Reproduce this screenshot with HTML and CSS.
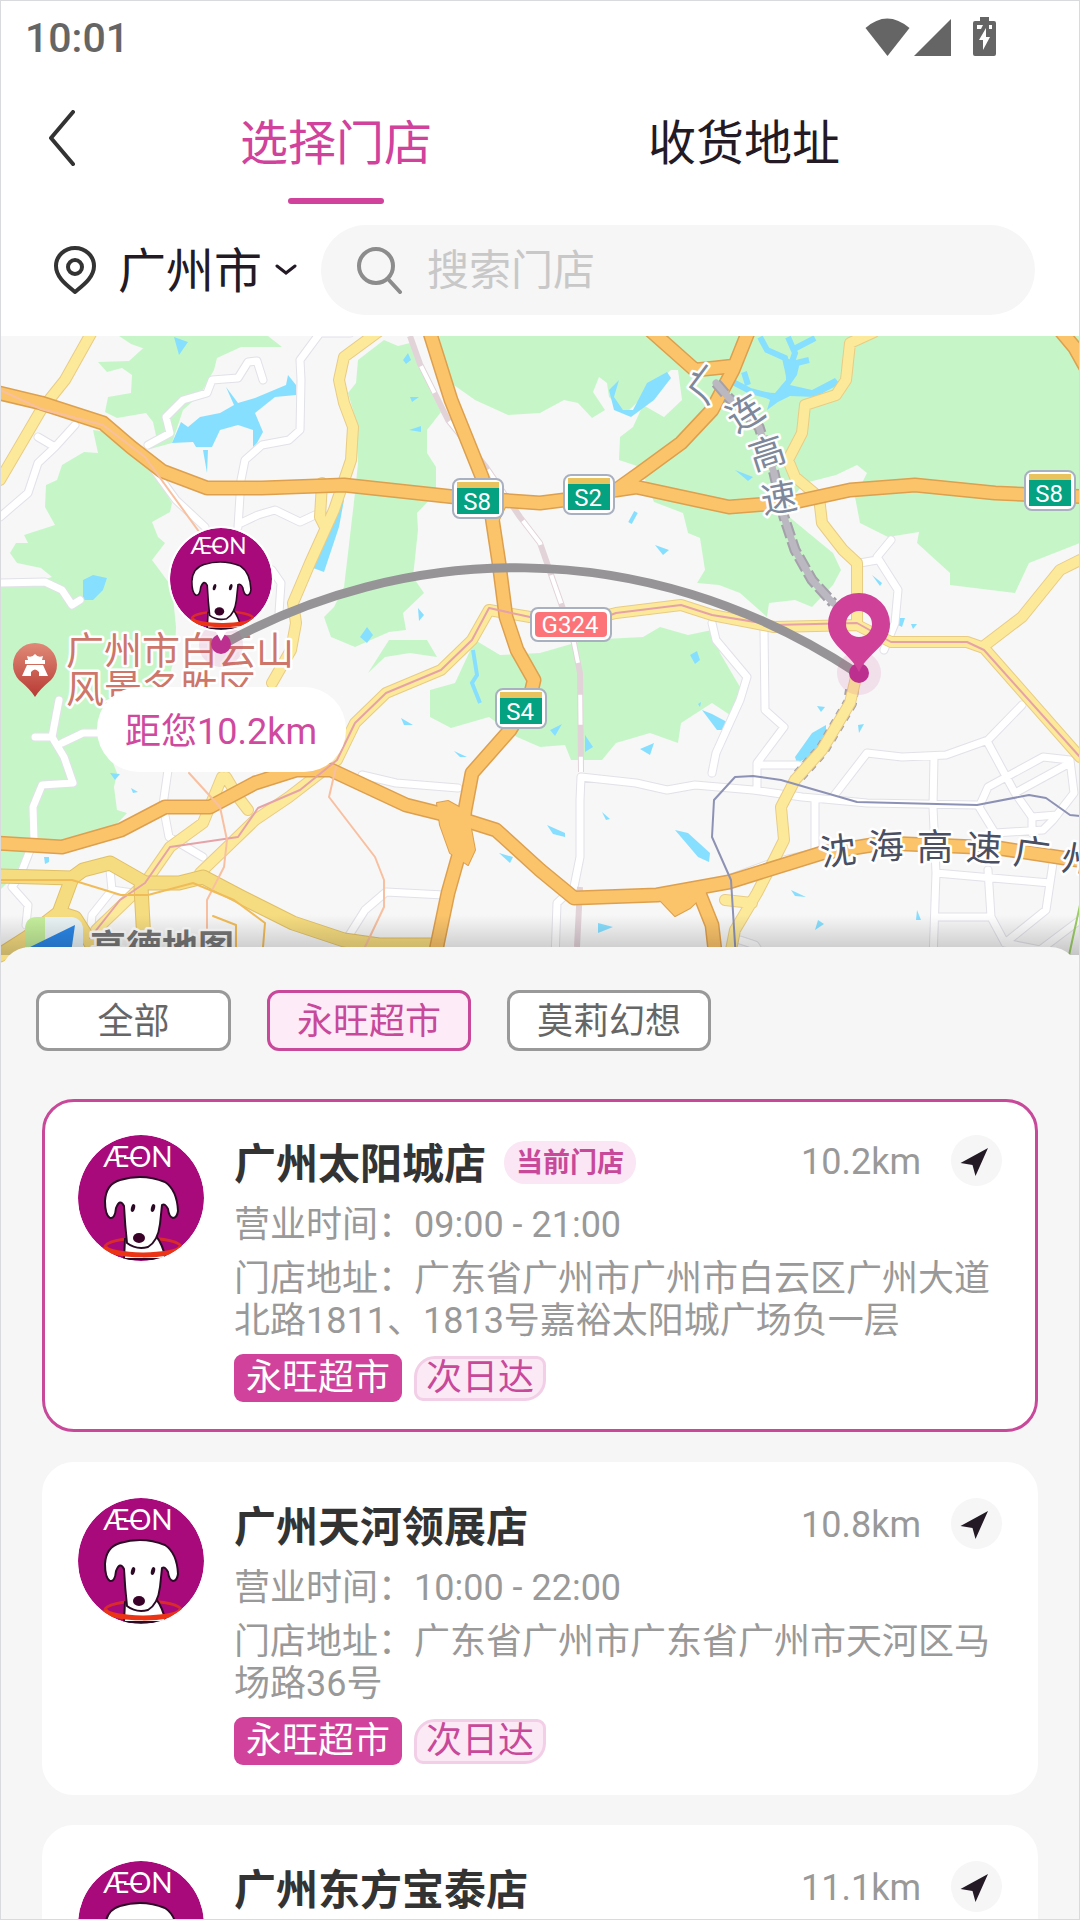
FILE: index.html
```html
<!DOCTYPE html>
<html lang="zh-CN">
<head>
  <meta charset="UTF-8" />
  <meta name="viewport" content="width=device-width, initial-scale=1.0"/>
  <title>选择门店</title>
  <link rel="stylesheet" href="styles.css">
</head>
<body>
  <!-- Símbolos compartidos -->
  <svg class="symbols" aria-hidden="true">
    <symbol id="logo" viewBox="0 0 126 126">
      <clipPath id="logo-clip"><circle cx="63" cy="63" r="63" /></clipPath>
      <g clip-path="url(#logo-clip)">
        <circle cx="63" cy="63" r="63" fill="#a80a7b" />
        <text class="logo-text" x="60" y="32" text-anchor="middle">ÆON</text>
        <path d="M46 23 H64" stroke="#fff" stroke-width="2" />
        <path d="M27 112 A38 9 0 0 1 103 112" fill="none" stroke="#d92b2b" stroke-width="3" />
        <path d="M47 104 L46 124 H88 Q84 108 78 101 Z" fill="#fff" stroke="#2c0a26" stroke-width="2" />
        <path d="M32 83 Q27 80 27 66 Q28 49 42 45 Q65 38 87 47 Q99 55 100 76 Q99 83 95 83 Q91 82 90 74 Q87 68 84 70 L82 89 Q80 106 70 112 Q58 115 49 108 Q47 90 46 71 Q42 63 38 73 Q37 84 32 83Z" fill="#fff" stroke="#2c0a26" stroke-width="2" />
        <ellipse cx="55" cy="73" rx="2" ry="4" fill="#2c0a26" transform="rotate(15 55 73)" />
        <ellipse cx="75" cy="73" rx="2" ry="4" fill="#2c0a26" transform="rotate(15 75 73)" />
        <ellipse cx="61" cy="103" rx="6" ry="5" fill="#3a0228" />
        <path d="M27 112 C30 122 98 123 103 112" fill="none" stroke="#ea3415" stroke-width="5" />
      </g>
    </symbol>
    <symbol id="arrow" viewBox="0 0 51 51">
      <path d="M37 13 L9.500 28 L21.500 30 L24.500 41Z" fill="#231a26" />
    </symbol>
  </svg>

  <main class="app">
    <header class="top">
      <div class="status">
        <span class="clock">10:01</span>
        <svg class="status-icons" viewBox="865 14 132 41" fill="#656565">
          <path d="M865.500 26 Q887 7 909.500 26 L887.500 54Z" />
          <path d="M914 54 L951 17 V54Z" />
          <path d="M980 15 H989 V19 H994 Q996 19 996 21 V52 Q996 54 994 54 H975 Q973 54 973 52 V21 Q973 19 975 19 H980Z" />
          <path d="M977 23 H983 L981 27 H977Z M989 23 H992 V27 H989Z M986 26 L979 38 H983 V48 L990 35 H986Z" fill="#fff" />
        </svg>
      </div>

      <nav class="tabs">
        <button class="back" aria-label="返回">
          <svg viewBox="0 0 26 56"><path d="M24 2 L2 28 L24 54" fill="none" stroke="#333" stroke-width="4" stroke-linecap="round" stroke-linejoin="round" /></svg>
        </button>
        <button class="tab tab-active">选择门店</button>
        <button class="tab">收货地址</button>
      </nav>

      <div class="search-row">
        <button class="city">
          <svg class="city-pin" viewBox="0 0 42 48" fill="none" stroke="#333" stroke-width="4">
            <path d="M21 46 C14 40 2 32 2 20 A19 18 0 0 1 40 20 C40 32 28 40 21 46Z" stroke-linejoin="round" />
            <circle cx="21" cy="21" r="7" />
          </svg>
          <span class="city-name">广州市</span>
          <svg class="city-down" viewBox="0 0 22 12"><path d="M2 2 L11 9 L20 2" fill="none" stroke="#231a26" stroke-width="3" stroke-linecap="round" /></svg>
        </button>
        <label class="search">
          <svg viewBox="0 0 46 48" fill="none" stroke="#8c8c8c" stroke-width="4" stroke-linecap="round">
            <circle cx="19" cy="20" r="17" /><path d="M31 33 L43 46" />
          </svg>
          <input type="text" placeholder="搜索门店" aria-label="搜索门店" />
        </label>
      </div>
    </header>

    <section class="map">
      <svg viewBox="0 336 1080 644" role="img" aria-label="地图">
        <defs>
          <linearGradient id="poi" x2="0" y2="1"><stop offset="0" stop-color="#e08a78" /><stop offset="1" stop-color="#b83a34" /></linearGradient>
          <linearGradient id="fade" x2="0" y2="1"><stop offset="0" stop-color="#000" stop-opacity="0" /><stop offset="1" stop-color="#000" stop-opacity=".2" /></linearGradient>
          <path id="calles" d="M350 333 H320 L300 360 301 380 300 430 289 440 262 445 245 460 241 480 238 527 M263 380 L257 361 248 362 238 378 212 380 207 393 183 400 166 417 170 433 148 445 M0 517 L28 493 38 463 55 447 38 437 M55 447 L75 425 M152 467 L176 500 205 527 M241 523 L258 515 275 510 300 522 315 515 M0 583 L45 582 62 590 72 605 80 600 M272 570 L281 583 279 613 M59 700 L52 737 35 737 M52 737 L64 757 73 783 42 785 33 807 34 840 21 873 12 887 28 905 26 925 M62 743 L83 733 97 733 M168 770 L163 805 169 837 203 857 M362 775 L396 783 458 788 M348 937 L365 910 386 892 444 895 M110 870 L112 890 140 894 M112 890 L92 915 90 935 M581 777 L580 800 580 857 574 887 557 903 555 960 M581 777 L636 783 667 790 695 785 753 790 802 797 867 803 977 805 M712 623 L716 640 747 677 740 700 716 753 712 773 M764 630 L765 710 784 727 757 763 757 790 M757 765 H798 M815 800 V853 L784 860 M833 797 L867 753 902 757 946 755 988 740 1022 705 M934 757 L933 807 936 873 933 960 M988 743 L1015 793 1032 817 1032 833 M979 807 L988 787 1043 757 1070 760 1074 793 1053 820 1043 830 995 833 979 807 M1015 793 L1070 763 M1032 817 L1057 815 M936 873 L1050 883 1046 910 1005 943 991 917 988 870 M936 917 H991 M1053 863 L1050 883 M1005 943 L1040 950 1080 920 M891 540 L877 557 898 590 895 623 884 650 M860 563 L877 560 M712 885 L774 862 M740 940 L755 945 765 960" />
          <path id="amarillas" d="M378 332 L344 357 339 380 344 403 353 427 351 460 334 510 310 563 293 603 296 623 291 650 272 683 M322 483 L320 517 325 527 M874 332 L850 343 846 380 836 395 805 405 802 433 788 460 795 477 819 497 822 523 843 550 857 563 857 623 M857 673 L850 703 822 750 795 780 781 807 784 840 774 860 757 893 735 930 729 960 M725 900 L752 903 M984 646 L1022 617 1060 570 1080 560 M96 930 L145 883 170 847 203 823 222 777 M226 777 L238 797 248 810 M200 873 L224 850 255 820 289 797 337 760 355 723 386 693 441 670 472 640 489 610 530 617 M600 617 L616 613 681 605 712 615 774 627 857 625 891 642 967 642 984 648 1080 757 M93 330 L65 380 41 410 0 480" />
          <path id="avenidas" d="M0 876 L72 878 83 870 110 863 145 883 179 883 203 877 241 897 293 923 344 940 379 945 437 945 M72 878 L59 913 28 937 0 955 M59 913 L75 918 92 945 M141 887 L145 960" />
          <path id="autopistas" d="M-5 392 L41 403 103 423 131 447 162 471 207 488 262 488 344 485 455 497 540 503 564 500 616 490 636 487 729 507 795 502 850 490 915 485 995 493 1090 497 M429 330 L451 400 482 477 492 517 499 563 506 617 517 650 534 680 530 697 510 730 472 773 465 810 461 847 448 893 434 960 M650 330 L695 370 715 368 733 366 M749 330 L733 370 712 410 681 443 640 473 619 488 M-5 843 L62 847 121 830 165 807 210 807 255 783 296 770 331 770 406 805 458 818 496 830 540 870 574 898 657 895 729 882 822 853 884 843 998 848 1090 862 M698 890 L712 925 716 960 M1060 330 L1075 348 1090 375" />
          <path id="cruces" d="M437 803 L448 801 468 812 475 850 468 865 450 853 440 825Z M655 895 L675 916 690 908 706 893 700 885Z M480 500 L507 503 494 530Z" />
        </defs>
        <rect y="336" width="1080" height="644" fill="#f7f7f7" />

        <!-- zonas verdes -->
        <g fill="#c6f6c8">
          <path d="M119 336 L131 344 148 350 150 342 129 361 98 362 107 372 122 368 132 375 131 393 108 397 105 412 117 418 146 413 153 422 157 440 150 449 172 443 183 410 200 395 214 370 217 358 241 347 282 347 268 336Z" />
          <path d="M93 430 L117 433 138 453 152 470 172 503 170 512 152 522 158 537 165 543 152 560 172 587 176 627 175 657 165 690 98 725 117 773 114 787 117 810 127 813 114 827 93 833 69 840 34 840 31 860 17 873 0 890 0 583 31 583 52 577 41 568 17 563 10 553 16 543 28 543 24 535 55 525 45 507 46 485 57 480 62 465 84 452 98 453Z" />
          <path d="M384 340 L358 360 356 383 348 393 355 417 358 463 355 493 348 553 344 587 334 607 324 617 331 637 355 647 389 632 406 630 403 613 424 593 413 577 418 530 417 513 436 493 436 467 427 453 427 430 441 412 430 390 420 367 410 343 398 346Z" />
          <path d="M439 336 H1080 V543 L1029 563 1015 593 950 585 950 573 917 543 919 532 888 537 860 523 855 497 867 473 857 465 836 475 805 483 781 510 805 530 833 553 841 570 833 585 812 607 795 600 769 603 767 617 740 593 719 585 697 583 705 570 700 538 688 533 683 513 654 502 640 467 619 460 620 437 633 427 643 405 664 417 682 400 678 370 671 370 626 413 609 397 607 383 599 377 593 392 605 410 592 418 578 403 564 400 540 413 508 415 475 400 451 383Z" />
          <path d="M430 690 L455 683 475 640 500 655 540 653 585 640 643 637 660 627 688 635 712 630 720 653 740 687 733 717 712 703 681 723 678 743 650 733 616 743 602 760 571 760 565 745 540 747 517 737 489 717 451 728 430 717Z" />
          <path d="M389 640 L368 673 385 657 410 653 437 657 427 640Z" />
        </g>

        <!-- agua -->
        <g fill="#87dfff">
          <path d="M226 387 L238 403 255 398 286 385 288 375 296 385 296 395 275 397 255 413 263 432 257 443 253 447 253 430 238 425 220 430 212 447 196 447 193 442 172 443 181 422 188 427 200 417 220 413 234 405Z" />
          <path d="M203 450 H208 L207 473Z M174 337 L188 342 179 355Z M83 580 L93 575 107 578 103 590 93 600 83 600Z" />
          <path d="M341 500 H344 L339 527 324 572 313 568 322 540 332 525Z" />
          <path d="M609 390 L619 380 614 397 623 410 633 410 647 383 667 372 671 378 654 400 631 417 614 410Z" />
          <path d="M785 358 L800 362 797 375 790 385 812 390 835 378 840 384 815 397 790 396 778 402 767 410 770 400 755 392 775 393 786 380Z" />
          <path d="M702 710 L712 714 727 722 724 730 717 730Z M640 749 L654 743 650 755Z M675 830 L688 833 710 853 709 862 698 857Z M826 725 V737 L809 757 797 763 795 757 812 733Z M585 735 L593 747 585 752Z M550 730 L562 724 555 736Z" />
          <path d="M547 825 L565 833 565 837 553 834Z M602 812 L610 819 606 820Z M598 923 L613 927 598 933Z M791 890 L806 897 795 896Z M818 920 L824 924 815 930Z M655 545 L669 550 663 555Z M872 575 L882 583 880 586Z" />
          <path d="M403 360 L408 353 411 360 406 364Z M410 397 L419 397 412 402Z M409 430 L421 426 421 432Z M418 608 L424 615 419 621Z M360 637 L367 627 373 635 367 643Z M690 655 L697 651 700 660 695 664Z M735 470 L753 477 748 481Z" />
          <path d="M401 718 L413 725 404 725Z M454 751 L467 757 460 757Z M110 773 L120 774 115 780Z M131 788 L138 792 133 793Z M44 857 H49 V862 L45 864Z M499 853 L513 857 510 863Z M858 725 L864 724 859 733Z M817 706 L825 707 821 712Z M698 704 L701 702 700 707Z M917 910 L921 920 916 920Z M896 618 H905 L902 627 896 624Z M911 624 H917 L913 629Z" />
        </g>
        <g fill="none" stroke="#87dfff" stroke-width="6">
          <path d="M760 337 L767 350 785 358 790 380 M788 337 L795 353 788 373 M815 338 L792 350 M809 360 L788 365 M733 382 L750 391 778 398 M744 372 L748 385" />
          <path stroke-width="4" d="M473 650 L477 675 472 683 480 703 M636 512 L630 523" />
        </g>

        <g fill="none" stroke-linejoin="round" stroke-linecap="round">
          <!-- calles menores: borde y relleno -->
          <use href="#calles" stroke="#e1e1e8" stroke-width="9" />
          <use href="#calles" stroke="#fff" stroke-width="7" />

          <!-- ferrocarril -->
          <path d="M410 336 L420 364 448 420 486 467 520 517 540 543 561 603 574 643 580 673 581 772 M580 887 L577 947" stroke="#e2d3d9" stroke-width="6" stroke-linecap="butt" />
          <path d="M410 336 L420 364 448 420 486 467 520 517 540 543 561 603 574 643 580 673 581 772" stroke="#fff" stroke-width="4" stroke-dasharray="30 32" stroke-dashoffset="-32" stroke-linecap="butt" />
          <path d="M852 690 L850 703 822 750 795 780" stroke="#a5a1aa" stroke-width="14" stroke-dasharray="6 6" stroke-linecap="butt" />

          <!-- carreteras amarillas -->
          <use href="#amarillas" stroke="#e8cc85" stroke-width="12" />
          <use href="#amarillas" stroke="#fde99a" stroke-width="10" />
          <use href="#avenidas" stroke="#e0bf66" stroke-width="15" />
          <use href="#avenidas" stroke="#f6dc80" stroke-width="13" />

          <!-- autopistas -->
          <use href="#autopistas" stroke="#dda04e" stroke-width="15" />
          <use href="#cruces" stroke="#dda04e" stroke-width="2" />
          <use href="#autopistas" stroke="#fbc46b" stroke-width="12" />
          <use href="#cruces" fill="#fbc46b" />

          <path d="M716 383 L728 397 759 427 774 473 784 517 795 550 812 580 833 603" stroke="#a5a1aa" stroke-width="11" stroke-dasharray="14 4" stroke-linecap="butt" />
          <path d="M716 383 L728 397 759 427 774 473 784 517 795 550 812 580 833 603" stroke="#bcb8c1" stroke-width="7" />

          <!-- líneas finas -->
          <path stroke="#e5a3a8" stroke-width="2" d="M90 938 L120 900 145 883 170 847 238 837 258 808 300 790 337 760 355 723 386 693 441 670 472 640 489 608 530 617 M600 619 L616 613 681 605 712 615 774 625 857 623 891 642 967 642 984 650 1080 757" />
          <path stroke="#f8c0a0" stroke-width="2" d="M0 390 L41 409 103 425 145 457 205 540 M189 773 L220 807 227 840 224 867 207 900 207 930 M336 767 L329 797 375 857 384 880 384 907 365 947" />
          <path stroke="#f1bc58" stroke-width="2" d="M0 880 L72 880 121 895 148 895 193 883 234 900 265 923 263 947 M213 916 L236 925 236 947" />
          <path stroke="#8d92b5" stroke-width="2" d="M736 960 L731 880 712 837 714 800 735 777 753 776 781 780 857 802 977 805 1029 795 1046 798 1070 815 1080 816" />
          <path stroke="#9ccf65" stroke-width="2" d="M1080 905 L1068 960" />
        </g>

        <!-- escudos -->
        <g class="shield">
          <g transform="translate(453 479)"><rect class="shield-box" width="50" height="39" rx="7" /><rect x="4" y="3" width="42" height="6" fill="#e8c35e" /><rect x="4" y="9" width="42" height="26" fill="#04a281" /><text x="24" y="31">S8</text></g>
          <g transform="translate(564 475)"><rect class="shield-box" width="50" height="39" rx="7" /><rect x="4" y="3" width="42" height="6" fill="#e8c35e" /><rect x="4" y="9" width="42" height="26" fill="#04a281" /><text x="24" y="31">S2</text></g>
          <g transform="translate(1025 471)"><rect class="shield-box" width="50" height="39" rx="7" /><rect x="4" y="3" width="42" height="6" fill="#e8c35e" /><rect x="4" y="9" width="42" height="26" fill="#04a281" /><text x="24" y="31">S8</text></g>
          <g transform="translate(496 689)"><rect class="shield-box" width="50" height="39" rx="7" /><rect x="4" y="3" width="42" height="6" fill="#e8c35e" /><rect x="4" y="9" width="42" height="26" fill="#04a281" /><text x="24" y="31">S4</text></g>
          <g transform="translate(531 608)"><rect class="shield-box" width="80" height="33" rx="7" /><rect x="4" y="4" width="72" height="25" rx="4" fill="#fc7478" /><text x="39" y="25">G324</text></g>
        </g>

        <!-- nombres -->
        <g class="road-name road-name-gray">
          <text transform="translate(706 384) rotate(-53)" y="13">广</text>
          <text transform="translate(745 413) rotate(-32)" y="13">连</text>
          <text transform="translate(767 453) rotate(-18)" y="13">高</text>
          <text transform="translate(779 498) rotate(-10)" y="13">速</text>
        </g>
        <g class="road-name">
          <text transform="translate(838 851) rotate(-7)" y="13">沈</text>
          <text transform="translate(886 846) rotate(-3)" y="13">海</text>
          <text transform="translate(935 847)" y="13">高</text>
          <text transform="translate(984 848) rotate(3)" y="13">速</text>
          <text transform="translate(1032 853) rotate(8)" y="13">广</text>
          <text transform="translate(1080 860) rotate(10)" y="13">州</text>
        </g>
        <path d="M35 697 Q31 690 19 680 A22 22 0 1 1 51 680 Q39 690 35 697Z" fill="url(#poi)" />
        <path d="M27 656 Q32 658 35 654 Q38 658 43 656 L42 660 H45 V664 H25 V660 H28Z M27 665 H43 L48 676 H39 V672 Q35 667 31 672 V676 H22Z" fill="#fff" />
        <g class="poi-name"><text x="66" y="664">广州市白云山</text><text x="66" y="702">风景名胜区</text></g>

        <!-- logo del mapa -->
        <rect x="25" y="917" width="58" height="58" rx="12" fill="#e9f3f6" />
        <path d="M45 917 V947 H25 V930 Q25 917 37 917Z" fill="#c4ee9b" />
        <path d="M75 925 L28 948 L70 960Z" fill="#2b87e8" />
        <text class="map-brand" x="90" y="961">高德地图</text>
        <rect y="915" width="1080" height="40" fill="url(#fade)" />

        <!-- recorrido -->
        <path d="M222 645 C400 545 640 530 857 673" fill="none" stroke="#969496" stroke-width="9" />
        <circle cx="221" cy="645" r="22" fill="#c2378f" opacity=".12" />
        <circle cx="221" cy="644" r="10" fill="#bd2f8f" />
        <circle cx="859" cy="673" r="22" fill="#c2378f" opacity=".12" />
        <circle cx="859" cy="673" r="10" fill="#bd2f8f" />
        <path d="M859 672 C850 652 828 646 828 624 A31 31 0 0 1 890 624 C890 646 868 652 859 672Z M859 611 A13 13 0 1 0 859 637 A13 13 0 1 0 859 611Z" fill="#cf4099" fill-rule="evenodd" />
        <path d="M212 625 L221 641 230 625Z" fill="#fff" />
        <circle cx="221" cy="579" r="53" fill="#fff" />
        <use href="#logo" x="170" y="528" width="102" height="102" />
        <rect x="97" y="687" width="249" height="85" rx="42" fill="#fff" />
        <text class="distance-tip" x="221" y="744">距您10.2km</text>
      </svg>
    </section>

    <section class="sheet">
      <div class="chips">
        <button class="chip">全部</button>
        <button class="chip chip-active">永旺超市</button>
        <button class="chip">莫莉幻想</button>
      </div>

      <article class="store store-active">
        <svg class="avatar"><use href="#logo" /></svg>
        <div class="info">
          <div class="head">
            <h2>广州太阳城店</h2>
            <span class="current">当前门店</span>
            <span class="km">10.2km</span>
            <button class="go" aria-label="导航"><svg><use href="#arrow" /></svg></button>
          </div>
          <p class="hours">营业时间：09:00 - 21:00</p>
          <p class="address">门店地址：广东省广州市广州市白云区广州大道北路1811、1813号嘉裕太阳城广场负一层</p>
          <div class="tags"><span class="tag">永旺超市</span><span class="tag tag-light">次日达</span></div>
        </div>
      </article>

      <article class="store">
        <svg class="avatar"><use href="#logo" /></svg>
        <div class="info">
          <div class="head">
            <h2>广州天河领展店</h2>
            <span class="km">10.8km</span>
            <button class="go" aria-label="导航"><svg><use href="#arrow" /></svg></button>
          </div>
          <p class="hours">营业时间：10:00 - 22:00</p>
          <p class="address">门店地址：广东省广州市广东省广州市天河区马场路36号</p>
          <div class="tags"><span class="tag">永旺超市</span><span class="tag tag-light">次日达</span></div>
        </div>
      </article>

      <article class="store">
        <svg class="avatar"><use href="#logo" /></svg>
        <div class="info">
          <div class="head">
            <h2>广州东方宝泰店</h2>
            <span class="km">11.1km</span>
            <button class="go" aria-label="导航"><svg><use href="#arrow" /></svg></button>
          </div>
        </div>
      </article>
    </section>
  </main>
</body>
</html>
```
FILE: styles.css
```css
* {
  box-sizing: border-box;
}

body {
  margin: 0;
  font-family: Roboto, 'Noto Sans CJK SC', sans-serif;
  color: #231a26;
  background-color: #f6f6f6;
}

button {
  padding: 0;
  border: none;
  background: none;
  color: inherit;
  font: inherit;
  cursor: pointer;
}

svg {
  display: block;
}

.symbols {
  position: absolute;
  width: 0;
  height: 0;
}

.app {
  position: relative;
  height: 100vh;
  overflow: hidden;
}

.app::after {
  content: '';
  position: absolute;
  inset: 0;
  border: 1px solid #d9dadd;
  pointer-events: none;
}

/* cabecera */
.top {
  background-color: #fff;
  padding-bottom: 21px;
}

.status {
  display: flex;
  align-items: center;
  justify-content: space-between;
  height: 72px;
  padding: 0 83px 0 25px;
}

.clock {
  padding-top: 3px;
  font-size: 41px;
  font-weight: 500;
  color: #656565;
}

.status-icons {
  width: 132px;
  height: 41px;
}

.tabs {
  display: grid;
  grid-template-columns: 132px 1fr 1fr;
  height: 132px;
  padding-right: 132px;
}

.back svg {
  width: 26px;
  height: 56px;
  margin-left: 49px;
}

.tab {
  position: relative;
  font-size: 48px;
  line-height: 48px;
  padding-top: 12px;
}

.tab-active {
  color: #d0429c;
}

.tab-active::after {
  content: '';
  position: absolute;
  left: 50%;
  bottom: 0;
  width: 96px;
  height: 6px;
  margin-left: -48px;
  border-radius: 3px;
  background-color: #d0429c;
}

.search-row {
  display: flex;
  align-items: center;
  gap: 24px;
  padding: 21px 45px 0 54px;
}

.city {
  display: flex;
  align-items: center;
  font-size: 48px;
  line-height: 48px;
}

.city-name {
  padding-top: 3px;
}

.city-pin {
  width: 42px;
  height: 48px;
  margin-right: 22px;
}

.city-down {
  width: 22px;
  height: 12px;
  margin-left: 13px;
}

.search {
  flex: 1;
  display: flex;
  align-items: center;
  gap: 24px;
  height: 90px;
  padding: 0 36px;
  border-radius: 45px;
  background-color: #f6f6f6;
}

.search svg {
  width: 46px;
  height: 48px;
}

.search input {
  flex: 1;
  min-width: 0;
  border: none;
  outline: none;
  background: none;
  padding: 0;
  font: inherit;
  font-size: 42px;
}

.search input::placeholder {
  color: #c8c8c8;
}

/* mapa */
.map svg {
  width: 100%;
  height: auto;
}

.logo-text {
  font-family: Lato, sans-serif;
  font-size: 28px;
  fill: #fff;
}

.shield-box {
  fill: #fff;
  stroke: #a9b0bf;
  stroke-width: 2;
}

.shield text {
  fill: #fff;
  font-size: 24px;
  text-anchor: middle;
}

.road-name text,
.poi-name text,
.map-brand {
  font-size: 36px;
  stroke: #fff;
  stroke-width: 5;
  stroke-linejoin: round;
  paint-order: stroke;
}

.road-name text {
  fill: #4a4f62;
  text-anchor: middle;
}

.road-name-gray text {
  fill: #7d889b;
}

.poi-name text {
  font-size: 38px;
  fill: #cd7669;
}

.map-brand {
  font-weight: 700;
  fill: #777;
}

.distance-tip {
  fill: #cf4a9f;
  font-size: 36px;
  text-anchor: middle;
}

/* panel de tiendas */
.sheet {
  position: relative;
  display: flex;
  flex-direction: column;
  gap: 30px;
  margin-top: -33px;
  padding: 43px 42px 30px;
  border-radius: 30px 30px 0 0;
  background-color: #f6f6f6;
}

.chips {
  display: flex;
  gap: 36px;
  margin: 0 0 18px -6px;
}

.chip {
  min-width: 195px;
  height: 61px;
  padding: 3px 27px 0;
  border: 3px solid #999;
  border-radius: 12px;
  background-color: #fff;
  color: #666;
  font-size: 36px;
  line-height: 42px;
}

.chip-active {
  border-color: #c8489a;
  background-color: #fdebf8;
  color: #c8489a;
}

.store {
  display: flex;
  gap: 30px;
  padding: 33px 33px 27px;
  border: 3px solid #fff;
  border-radius: 32px;
  background-color: #fff;
}

.store-active {
  border-color: #c8489a;
}

.avatar {
  flex: none;
  width: 126px;
  height: 126px;
}

.info {
  flex: 1;
}

.head {
  display: flex;
  align-items: center;
  height: 51px;
}

.head h2 {
  margin: 0;
  padding-top: 9px;
  color: #333;
  font-size: 42px;
  line-height: 48px;
}

.current {
  margin: 3px 0 0 18px;
  padding: 1px 12px 0;
  border-radius: 21px;
  background-color: #fae6f4;
  color: #c8489a;
  font-size: 27px;
  font-weight: 700;
  line-height: 42px;
}

.km {
  margin-left: auto;
  padding-top: 3px;
  color: #999;
  font-size: 36px;
}

.go {
  width: 51px;
  height: 51px;
  margin-left: 30px;
  border-radius: 50%;
  background-color: #f6f6f6;
}

.go svg {
  width: 51px;
  height: 51px;
}

.hours,
.address {
  margin: 18px 0 0;
  color: #999;
  font-size: 36px;
  line-height: 42px;
}

.address {
  margin-top: 12px;
}

.tags {
  display: flex;
  align-items: center;
  gap: 12px;
  margin-top: 12px;
}

.tag {
  padding: 0 12px;
  border-radius: 9px;
  background-color: #d0429c;
  color: #fff;
  font-size: 36px;
  line-height: 48px;
}

.tag-light {
  padding: 0 9px;
  border: 3px solid #f2cfe6;
  border-radius: 21px 9px;
  background-color: #fbe9f5;
  color: #c8489a;
  line-height: 39px;
}
```
